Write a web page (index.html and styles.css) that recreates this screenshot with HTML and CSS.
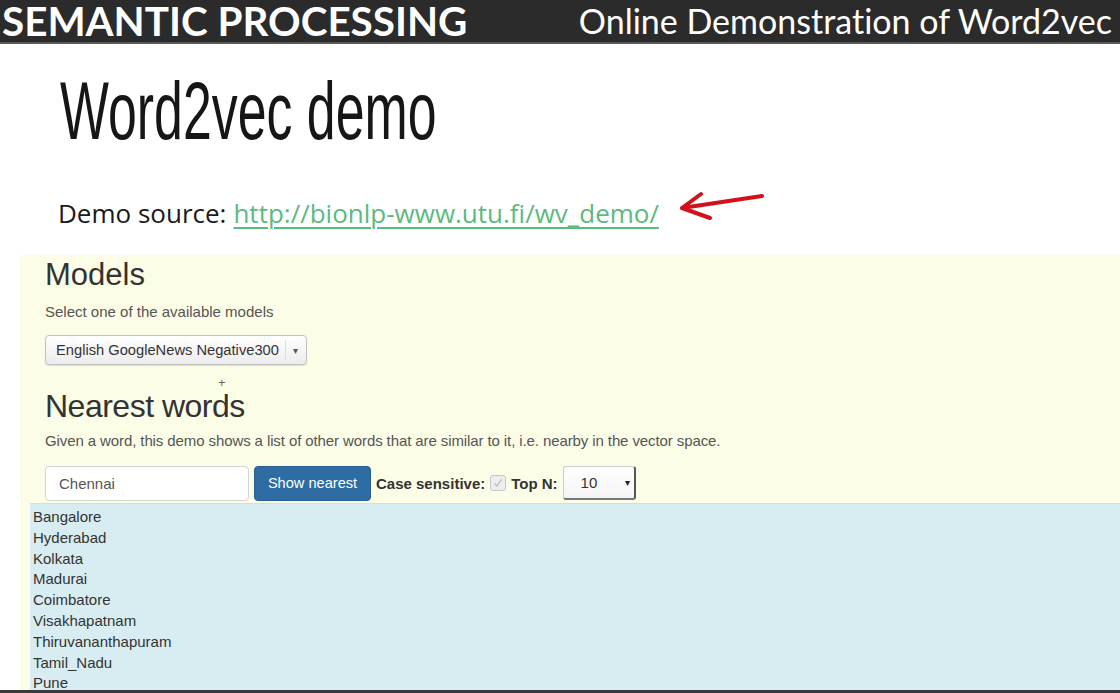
FILE: index.html
```html
<!DOCTYPE html>
<html>
<head>
<meta charset="utf-8">
<link rel="stylesheet" href="styles.css">
</head>
<body>
<header class="topbar">
  <span class="brand">SEMANTIC PROCESSING</span>
  <span class="subtitle">Online Demonstration of Word2vec</span>
</header>
<main class="slide">
  <div class="title-wrap"><h1 class="title">Word2vec demo</h1></div>
  <p class="source">Demo source: <a class="link" href="#">http://bionlp-www.utu.fi/wv_demo/</a>
    <svg class="arrow" width="92" height="32" viewBox="0 0 92 32">
      <path d="M85 6 L5 18 M5 18 L24 4 M5 18 L33 28" fill="none" stroke="#d2111b" stroke-width="4" stroke-linecap="round" stroke-linejoin="round"/>
    </svg>
  </p>
  <section class="demo">
    <div class="models">
      <h2 class="h-models">Models</h2>
      <p class="hint">Select one of the available models</p>
      <div class="select model-select"><span class="sel-text">English GoogleNews Negative300</span><span class="sel-sep"></span><span class="caret">▾</span></div>
      <div class="cursor">+</div>
      <h2 class="h-nearest">Nearest words</h2>
      <p class="hint hint2">Given a word, this demo shows a list of other words that are similar to it, i.e. nearby in the vector space.</p>
      <div class="controls">
        <div class="input">Chennai</div>
        <div class="btn">Show nearest</div>
        <span class="lbl">Case sensitive:</span>
        <span class="check"><svg width="12" height="12" viewBox="0 0 12 12"><path d="M2.5 6.5 L5 9 L9.5 2.5" fill="none" stroke="#b8b8b8" stroke-width="1.3"/></svg></span>
        <span class="lbl">Top N:</span>
        <div class="topn"><span>10</span><span class="caret2">▾</span></div>
      </div>
    </div>
    <div class="results">
      <div>Bangalore</div>
      <div>Hyderabad</div>
      <div>Kolkata</div>
      <div>Madurai</div>
      <div>Coimbatore</div>
      <div>Visakhapatnam</div>
      <div>Thiruvananthapuram</div>
      <div>Tamil_Nadu</div>
      <div>Pune</div>
    </div>
  </section>
</main>
<div class="bottombar"></div>
</body>
</html>
```
FILE: styles.css
```css
html, body { margin: 0; padding: 0; }
body {
  width: 1120px;
  height: 693px;
  overflow: hidden;
  background: #ffffff;
  display: flex;
  flex-direction: column;
  font-family: "Liberation Sans", Arial, sans-serif;
}
.topbar {
  height: 42px;
  background: #2b2b2b;
  border-bottom: 2px solid #5a5a5a;
  display: flex;
  align-items: center;
  justify-content: space-between;
  padding: 0 8px 0 2px;
  color: #ffffff;
  flex: none;
  font-variant-ligatures: none;
}
.brand {
  font-family: Lato, sans-serif;
  font-weight: 700;
  font-size: 40.4px;
  line-height: 40px;
}
.subtitle {
  font-family: Lato, sans-serif;
  font-weight: 400;
  font-size: 34px;
  line-height: 40px;
}
.slide {
  flex: 1;
  display: flex;
  flex-direction: column;
  min-height: 0;
}
.title-wrap { padding: 22px 0 0 60px; }
.title {
  margin: 0;
  font-family: "Liberation Sans", sans-serif;
  font-weight: 400;
  font-size: 81px;
  line-height: 90px;
  color: #161616;
  transform: scaleX(0.64);
  transform-origin: left center;
  white-space: nowrap;
}
.source {
  margin: 40px 0 0 58px;
  font-family: "Open Sans", sans-serif;
  font-size: 26px;
  line-height: 34px;
  color: #1a1a1a;
  display: flex;
  align-items: center;
}
.link {
  color: #5dba7f;
  text-decoration: underline;
  text-decoration-thickness: 2px;
  text-underline-offset: 4px;
  margin-left: 7px;
}
.arrow { margin-left: 18px; margin-top: -14px; }
.demo {
  flex: 1;
  margin: 25px 0 0 20px;
  background: #fcfde7;
  display: flex;
  flex-direction: column;
  min-height: 0;
}
.models { padding: 2px 0 0 25px; position: relative; }
.h-models {
  margin: 0;
  font-size: 31px;
  font-weight: 400;
  line-height: 36px;
  color: #333;
}
.hint {
  margin: 9px 0 0 0;
  font-size: 15px;
  line-height: 20px;
  color: #555;
}
.select {
  display: inline-flex;
  align-items: center;
  box-sizing: border-box;
  height: 30px;
  border: 1px solid #c2c2c2;
  border-radius: 4px;
  background: linear-gradient(#ffffff, #ececec);
  box-shadow: 0 1px 1px rgba(0,0,0,0.12);
  font-size: 14.7px;
  color: #333;
}
.model-select { margin-top: 13px; width: 262px; padding-left: 10px; }
.sel-sep { width: 1px; height: 20px; background: #ddd; margin: 0 7px 0 6px; }
.caret { font-size: 10px; color: #555; }
.cursor {
  position: absolute;
  left: 198px;
  top: 121px;
  font-size: 13px;
  color: #666;
  line-height: 13px;
}
.h-nearest {
  margin: 23px 0 0 0;
  font-size: 32px;
  font-weight: 400;
  line-height: 36px;
  color: #333;
  letter-spacing: -0.5px;
}
.hint2 { margin-top: 7px; letter-spacing: -0.1px; }
.controls {
  margin-top: 14px;
  display: flex;
  align-items: center;
  height: 36px;
}
.input {
  box-sizing: border-box;
  width: 204px;
  height: 35px;
  border: 1px solid #d5d5d5;
  border-radius: 4px;
  background: #fff;
  padding-left: 13px;
  display: flex;
  align-items: center;
  font-size: 15px;
  color: #555;
}
.btn {
  box-sizing: border-box;
  margin-left: 5px;
  width: 117px;
  height: 35px;
  border-radius: 4px;
  background: #2d6da3;
  border: 1px solid #285e8e;
  color: #fff;
  font-size: 14.6px;
  display: flex;
  align-items: center;
  justify-content: center;
}
.lbl { font-weight: 700; font-size: 15px; color: #333; margin-left: 5px; }
.check {
  box-sizing: border-box;
  width: 16px; height: 16px;
  margin-left: 5px;
  border: 1px solid #c8c8c8;
  border-radius: 3px;
  background: #eee;
  display: flex; align-items: center; justify-content: center;
}
.topn {
  box-sizing: border-box;
  margin-left: 5px;
  width: 73px;
  height: 34px;
  border: 1px solid #ccc;
  border-right: 2px solid #555;
  border-bottom: 2px solid #777;
  border-radius: 3px;
  background: linear-gradient(#fff, #f4f4f4);
  display: flex;
  align-items: center;
  justify-content: space-between;
  padding: 0 4px 0 17px;
  font-size: 15px;
  color: #333;
}
.caret2 { font-size: 10px; color: #222; }
.results {
  flex: 1;
  margin: 2px 0 0 10px;
  background: #d8edf1;
  border-top: 1px solid #c9e2e8;
  padding: 3px 0 0 3px;
  font-size: 15px;
  line-height: 20.8px;
  color: #333;
}
.bottombar { height: 3px; background: #3a3a3a; flex: none; }
```
